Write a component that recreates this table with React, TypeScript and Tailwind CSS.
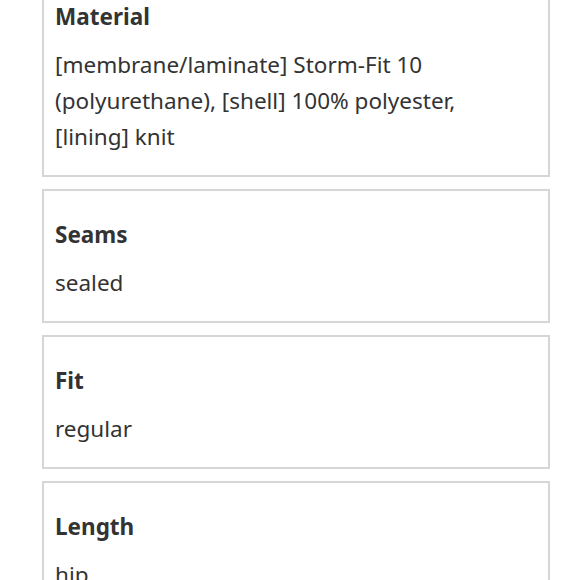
const specs = [
  {
    label: "Material",
    value: "[membrane/laminate] Storm-Fit 10 (polyurethane), [shell] 100% polyester, [lining] knit",
  },
  { label: "Seams", value: "sealed" },
  { label: "Fit", value: "regular" },
  { label: "Length", value: "hip" },
];

export default function App() {
  return (
    <div
      className="h-[580px] overflow-hidden bg-white text-[#333333]"
      style={{ fontFamily: '"Noto Sans", "Open Sans", sans-serif' }}
    >
      <div className="mx-[42px] mt-[-29px] flex w-[508px] flex-col gap-[12px]">
        {specs.map((spec) => (
          <div
            key={spec.label}
            className="border-2 border-[#d6d6d6] px-[11px] pt-[26px] pb-[20px]"
          >
            <h3 className="text-[22.5px] font-bold leading-[36px]">{spec.label}</h3>
            <p className="mt-[12px] max-w-[460px] text-[22.5px] leading-[36px]">{spec.value}</p>
          </div>
        ))}
      </div>
    </div>
  );
}
